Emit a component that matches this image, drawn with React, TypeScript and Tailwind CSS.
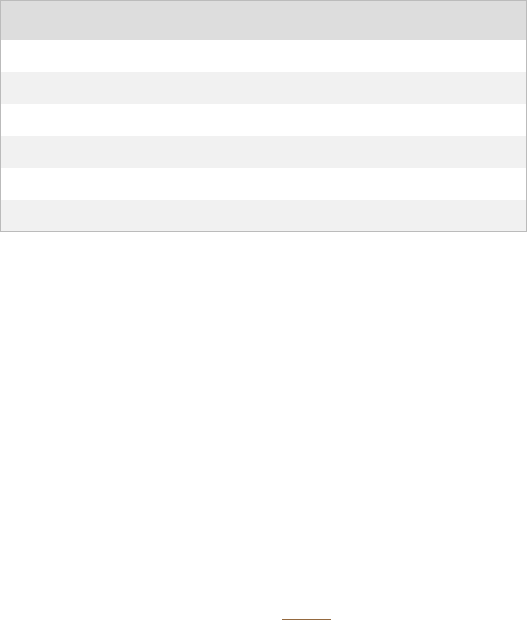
export default function App() {
  const rows = [0, 1, 2, 3, 4, 5];
  return (
    <div className="w-[527px] h-[620px] overflow-hidden bg-white font-['Liberation_Sans',sans-serif]">
      <div className="border border-[#bbbbbb]">
        <div className="h-[39px] bg-[#dddddd]" />
        {rows.map((i) => (
          <div
            key={i}
            className={`${i === 5 ? "h-[31px]" : "h-8"} ${i % 2 === 1 ? "bg-[#f1f1f1]" : "bg-white"}`}
          />
        ))}
      </div>
      <div className="mt-[387px] ml-[282px] w-[49px] h-px bg-[#94693f]" />
    </div>
  );
}
